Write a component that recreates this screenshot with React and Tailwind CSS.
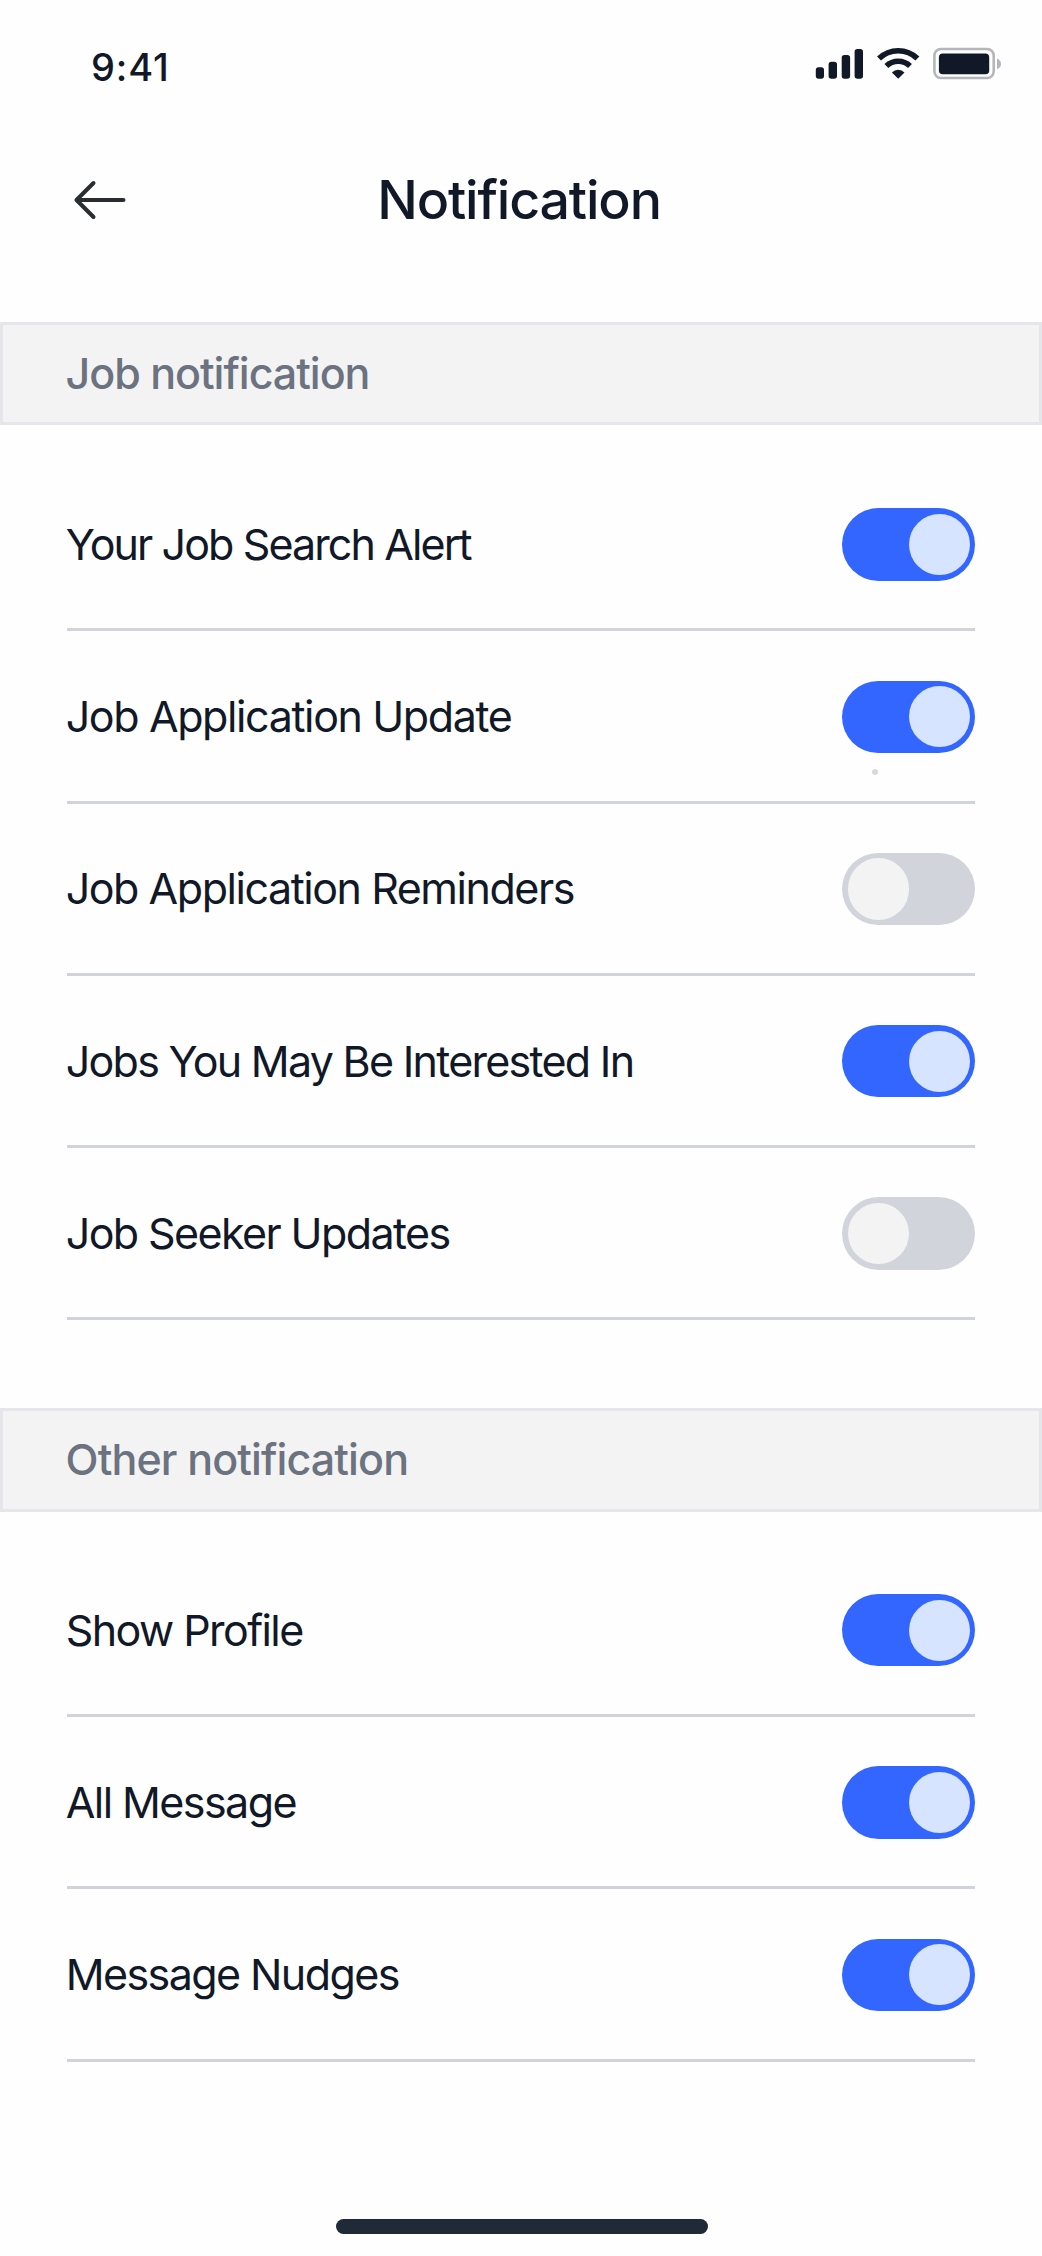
import React from "react";

const SECTIONS = [
  {
    title: "Job notification",
    tracking: "tracking-[-1.03px]",
    bar: "mt-[67px] h-[103px]",
    list: "pt-[34px]",
    items: [
      { label: "Your Job Search Alert", on: true, tracking: "tracking-[-1.9px]" },
      { label: "Job Application Update", on: true, tracking: "tracking-[-1.39px]", dot: true },
      { label: "Job Application Reminders", on: false, tracking: "tracking-[-1.46px]" },
      { label: "Jobs You May Be Interested In", on: true, tracking: "tracking-[-1.72px]" },
      { label: "Job Seeker Updates", on: false, tracking: "tracking-[-1.6px]" },
    ],
  },
  {
    title: "Other notification",
    tracking: "tracking-[-0.88px]",
    bar: "mt-[87.6px] h-[104px]",
    list: "pt-[32.8px]",
    items: [
      { label: "Show Profile", on: true, tracking: "tracking-[-1.57px]" },
      { label: "All Message", on: true, tracking: "tracking-[-1.56px]" },
      { label: "Message Nudges", on: true, tracking: "tracking-[-1.58px]" },
    ],
  },
];

function StatusIcons() {
  return (
    <svg className="h-[40px] w-[190px]" viewBox="0 0 190 40" fill="#111827">
      <rect x="0.8" y="24.3" width="8.2" height="11.5" rx="2.8" />
      <rect x="13.6" y="18.8" width="8.4" height="17" rx="2.8" />
      <rect x="26.7" y="12" width="8.4" height="23.8" rx="2.8" />
      <rect x="39.6" y="6" width="8.4" height="29.8" rx="2.8" />
      <g fill="none" stroke="#111827" strokeWidth="5.6">
        <path d="M64 15.6A27.5 27.5 0 0 1 102.4 15.6" />
        <path d="M71.4 23A17 17 0 0 1 95 23" />
      </g>
      <path d="M83.2 35.7L76.9 29.4A9 9 0 0 1 89.5 29.4Z" strokeLinejoin="round" />
      <rect x="119.4" y="6" width="59.3" height="29" rx="6.5" fill="none" stroke="#b4b6ba" strokeWidth="2.6" />
      <rect x="123.9" y="10.6" width="50.3" height="20.6" rx="3.8" />
      <path d="M182 15.6Q186 17.2 186 20.9T182 26.2Z" fill="#b4b6ba" />
    </svg>
  );
}

function Toggle({ on }) {
  return (
    <div
      role="switch"
      aria-checked={on}
      className={
        on
          ? "flex h-[72.3px] w-[133.4px] justify-end rounded-full bg-[#3366ff] p-[5.6px]"
          : "flex h-[72.3px] w-[133.4px] justify-start rounded-full bg-[#d1d5db] p-[5.6px]"
      }
    >
      <div className={on ? "size-[61.1px] rounded-full bg-[#d6e4ff]" : "size-[61.1px] rounded-full bg-[#f3f3f3]"} />
    </div>
  );
}

function Row({ item }) {
  return (
    <li className="relative flex h-[172.28px] items-center justify-between border-b-3 border-[#d1d3da] pt-[1.6px]">
      <span className={`-ml-px text-[43px] leading-none whitespace-nowrap text-[#111827] ${item.tracking}`}>{item.label}</span>
      <Toggle on={item.on} />
      {item.dot && <span className="absolute right-[97px] bottom-[25.3px] size-[6px] rounded-full bg-[#d9d9d9]" />}
    </li>
  );
}

export default function App() {
  return (
    <div className="h-[2256px] w-[1042px] overflow-hidden bg-[#fefefe] font-['Inter',sans-serif] text-[#111827]">
      <div className="flex h-[133px] items-start justify-between pl-[91px] pr-[37px]">
        <span className="mt-[48px] text-[38px] leading-[38px] font-medium tracking-[0.9px]">9:41</span>
        <div className="mt-[43px]">
          <StatusIcons />
        </div>
      </div>
      <header className="grid h-[122px] grid-cols-[75px_1fr_79px] items-center px-[70px] pt-[12px]">
        <svg className="h-[44px] w-[60px]" viewBox="0 0 60 44" fill="none" stroke="#2b2e30" strokeWidth="4" strokeLinecap="round" strokeLinejoin="round">
          <path d="M53.5 22H6.5M23.5 5L6.5 22L23.5 39" />
        </svg>
        <h1 className="text-center text-[53.7px] leading-none font-medium tracking-[-1.15px]">Notification</h1>
      </header>
      {SECTIONS.map((section) => (
        <section key={section.title}>
          <h2 className={`flex items-center border-3 border-[#e4e6ea] bg-[#f3f3f3] pl-[62.6px] text-[43px] leading-none font-medium text-[#6b7280] ${section.tracking} ${section.bar}`}>
            {section.title}
          </h2>
          <ul className={`px-[66.7px] ${section.list}`}>
            {section.items.map((item) => (
              <Row key={item.label} item={item} />
            ))}
          </ul>
        </section>
      ))}
      <div className="mt-[157.9px] ml-[336px] h-[14.4px] w-[372px] rounded-full bg-[#1f2937]" />
    </div>
  );
}
